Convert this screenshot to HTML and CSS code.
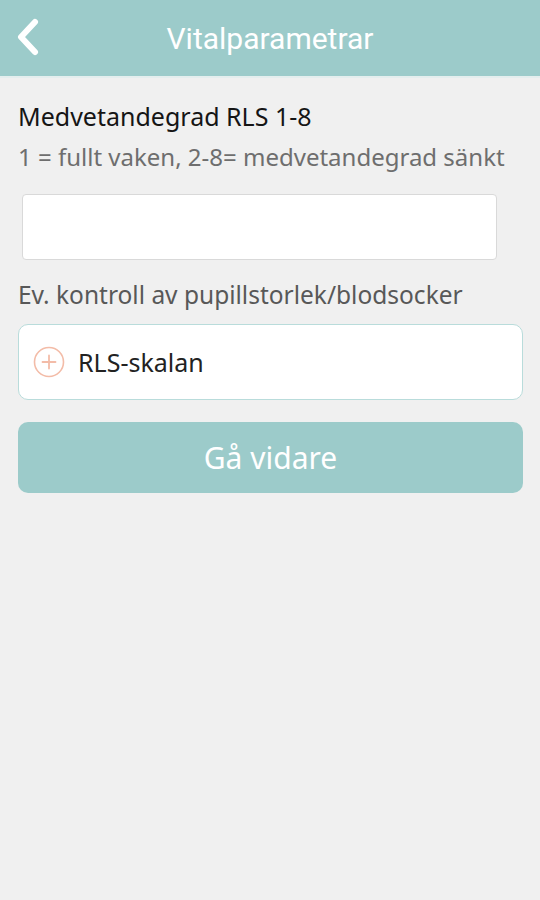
FILE: index.html
```html
<!DOCTYPE html>
<html>
<head>
<title>Vitalparametrar</title>
<link rel="stylesheet" href="styles.css">
</head>
<body>

<header class="topbar">
  <button class="back-btn" type="button" aria-label="Tillbaka">
    <svg width="30" height="40" viewBox="0 0 30 40">
      <polyline points="19,5 5,20 19,35" fill="none" stroke="#fff" stroke-width="6" stroke-linecap="round" stroke-linejoin="round"/>
    </svg>
  </button>
  <h1 class="title">Vitalparametrar</h1>
</header>

<main class="content">
  <div class="label">Medvetandegrad RLS 1-8</div>
  <div class="hint">1 = fullt vaken, 2-8= medvetandegrad sänkt</div>

  <input type="text" class="value-input">

  <div class="hint note">Ev. kontroll av pupillstorlek/blodsocker</div>

  <div class="expand-card">
    <svg class="plus-icon" width="32" height="32" viewBox="0 0 32 32">
      <circle cx="16" cy="16" r="14.5" fill="none" stroke="#f3bca8" stroke-width="1.6"/>
      <path d="M16 9.5v13M9.5 16h13" stroke="#f3bca8" stroke-width="1.8" stroke-linecap="round"/>
    </svg>
    <span class="card-text">RLS-skalan</span>
  </div>

  <button class="next-btn" type="button">Gå vidare</button>
</main>

</body>
</html>
```

FILE: styles.css
```css
body {
  margin: 0;
  background-color: #f0f0f0;
  font-family: "Noto Sans", Roboto, sans-serif;
}

.topbar {
  height: 76px;
  background-color: #9ccbca;
  display: flex;
  align-items: center;
  justify-content: center;
  position: relative;
  border-bottom: 2px solid #e4eeee;
}

.back-btn {
  position: absolute; /* sits over the bar, title stays centered */
  left: 16px;
  top: 17px;
  padding: 0;
  border: none;
  background: none;
  cursor: pointer;
}

.title {
  margin: 0;
  font-family: Roboto, sans-serif;
  font-weight: normal;
  font-size: 30px;
  color: #fff;
}

.content {
  display: flex;
  flex-direction: column;
  padding: 0 17px 0 18px;
}

.label {
  margin-top: 22px;
  font-size: 25px;
  color: #151515;
  line-height: 32px;
}

.hint {
  font-size: 24px;
  color: #6e6e6e;
  line-height: 32px;
  margin-top: 9px;
  white-space: nowrap;
}

.value-input {
  margin: 21px 26px 0 4px;
  height: 66px;
  border: 1px solid #d9d9d9;
  border-radius: 4px;
  background-color: #fff;
  box-sizing: border-box;
  font-size: 20px;
}

.note {
  margin-top: 19px;
  font-size: 24.5px;
  color: #585858;
}

.expand-card {
  margin-top: 13px;
  height: 76px;
  box-sizing: border-box;
  background-color: #fff;
  border: 1px solid #b9dcdb;
  border-radius: 10px;
  display: flex;
  align-items: center;
  padding-left: 14px;
  gap: 13px;
}

.card-text {
  font-size: 25px;
  color: #222;
}

.next-btn {
  margin-top: 22px;
  height: 71px;
  border: none;
  border-radius: 10px;
  background-color: #9ccbca;
  color: #fff;
  font-family: "Noto Sans", sans-serif;
  font-size: 30px;
  cursor: pointer;
}
```
